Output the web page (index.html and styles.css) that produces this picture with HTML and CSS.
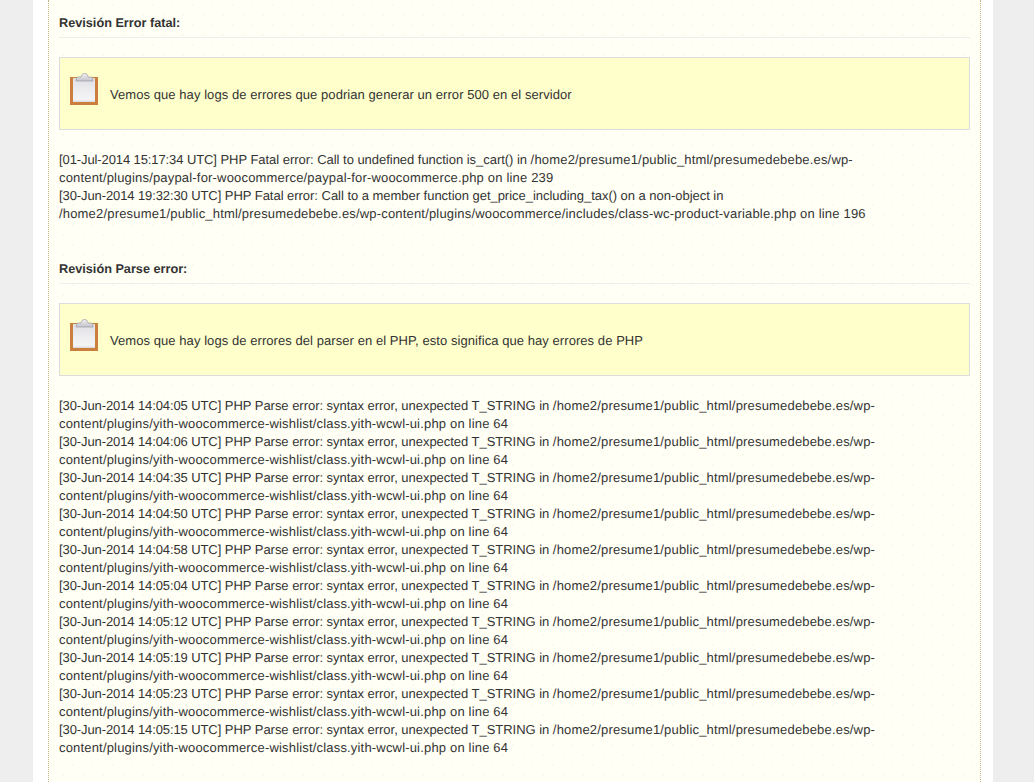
FILE: index.html
```html
<!DOCTYPE html>
<html lang="es">
<head>
<meta charset="utf-8">
<title>Revisión de errores</title>
<link rel="stylesheet" href="styles.css">
</head>
<body>
<div class="page">
  <div class="panel">
    <h3 class="heading">Revisión Error fatal:</h3>
    <div class="notice">
      <svg class="clip" width="28" height="32" viewBox="0 0 28 32"><defs><linearGradient id="sheet" x1="0" y1="0" x2="0" y2="1"><stop offset="0" stop-color="#dfdfe4"/><stop offset="0.55" stop-color="#eeeef1"/><stop offset="0.9" stop-color="#f4f4f6"/><stop offset="1" stop-color="#d9d8dc"/></linearGradient><linearGradient id="clasp" x1="0" y1="0" x2="0" y2="1"><stop offset="0" stop-color="#eeeef2"/><stop offset="1" stop-color="#c4c4cc"/></linearGradient></defs><rect x="0" y="4" width="28" height="28" fill="#cb7f3d"/><rect x="3" y="5" width="22" height="24" fill="url(#sheet)"/><path d="M6 8 L6.500 5 Q7 4 8 4 H11 C11.500 1.500 12.500 0.500 14.500 0.500 C16.500 0.500 17.500 1.500 18 4 H21 Q22 4 22.500 5 L23 8 Z" fill="url(#clasp)" stroke="#9a9aa5" stroke-width="0.7"/></svg>
      <span class="msg">Vemos que hay logs de errores que podrian generar un error 500 en el servidor</span>
    </div>
    <p class="log"><span class="ts">[01-Jul-2014 15:17:34 UTC]</span> PHP Fatal error: Call to undefined function is_cart() in <span class="path">/home2/presume1/public_html/presumedebebe.es/wp-</span><span class="path">content/plugins/paypal-for-woocommerce/paypal-for-woocommerce.php on line 239</span><br>
<span class="ts">[30-Jun-2014 19:32:30 UTC]</span> PHP Fatal error: Call to a member function get_price_including_tax() on a non-object in <span class="path">/home2/presume1/public_html/presumedebebe.es/wp-content/plugins/woocommerce/includes/class-wc-product-variable.php on line 196</span></p>
    <h3 class="heading second">Revisión Parse error:</h3>
    <div class="notice">
      <svg class="clip" width="28" height="32" viewBox="0 0 28 32"><rect x="0" y="4" width="28" height="28" fill="#cb7f3d"/><rect x="3" y="5" width="22" height="24" fill="url(#sheet)"/><path d="M6 8 L6.500 5 Q7 4 8 4 H11 C11.500 1.500 12.500 0.500 14.500 0.500 C16.500 0.500 17.500 1.500 18 4 H21 Q22 4 22.500 5 L23 8 Z" fill="url(#clasp)" stroke="#9a9aa5" stroke-width="0.7"/></svg>
      <span class="msg">Vemos que hay logs de errores del parser en el PHP, esto significa que hay errores de PHP</span>
    </div>
    <p class="log"><span class="ts">[30-Jun-2014 14:04:05 UTC]</span> PHP Parse error: syntax error, unexpected T_STRING in <span class="path">/home2/presume1/public_html/presumedebebe.es/wp-</span><span class="path">content/plugins/yith-woocommerce-wishlist/class.yith-wcwl-ui.php on line 64</span><br>
<span class="ts">[30-Jun-2014 14:04:06 UTC]</span> PHP Parse error: syntax error, unexpected T_STRING in <span class="path">/home2/presume1/public_html/presumedebebe.es/wp-</span><span class="path">content/plugins/yith-woocommerce-wishlist/class.yith-wcwl-ui.php on line 64</span><br>
<span class="ts">[30-Jun-2014 14:04:35 UTC]</span> PHP Parse error: syntax error, unexpected T_STRING in <span class="path">/home2/presume1/public_html/presumedebebe.es/wp-</span><span class="path">content/plugins/yith-woocommerce-wishlist/class.yith-wcwl-ui.php on line 64</span><br>
<span class="ts">[30-Jun-2014 14:04:50 UTC]</span> PHP Parse error: syntax error, unexpected T_STRING in <span class="path">/home2/presume1/public_html/presumedebebe.es/wp-</span><span class="path">content/plugins/yith-woocommerce-wishlist/class.yith-wcwl-ui.php on line 64</span><br>
<span class="ts">[30-Jun-2014 14:04:58 UTC]</span> PHP Parse error: syntax error, unexpected T_STRING in <span class="path">/home2/presume1/public_html/presumedebebe.es/wp-</span><span class="path">content/plugins/yith-woocommerce-wishlist/class.yith-wcwl-ui.php on line 64</span><br>
<span class="ts">[30-Jun-2014 14:05:04 UTC]</span> PHP Parse error: syntax error, unexpected T_STRING in <span class="path">/home2/presume1/public_html/presumedebebe.es/wp-</span><span class="path">content/plugins/yith-woocommerce-wishlist/class.yith-wcwl-ui.php on line 64</span><br>
<span class="ts">[30-Jun-2014 14:05:12 UTC]</span> PHP Parse error: syntax error, unexpected T_STRING in <span class="path">/home2/presume1/public_html/presumedebebe.es/wp-</span><span class="path">content/plugins/yith-woocommerce-wishlist/class.yith-wcwl-ui.php on line 64</span><br>
<span class="ts">[30-Jun-2014 14:05:19 UTC]</span> PHP Parse error: syntax error, unexpected T_STRING in <span class="path">/home2/presume1/public_html/presumedebebe.es/wp-</span><span class="path">content/plugins/yith-woocommerce-wishlist/class.yith-wcwl-ui.php on line 64</span><br>
<span class="ts">[30-Jun-2014 14:05:23 UTC]</span> PHP Parse error: syntax error, unexpected T_STRING in <span class="path">/home2/presume1/public_html/presumedebebe.es/wp-</span><span class="path">content/plugins/yith-woocommerce-wishlist/class.yith-wcwl-ui.php on line 64</span><br>
<span class="ts">[30-Jun-2014 14:05:15 UTC]</span> PHP Parse error: syntax error, unexpected T_STRING in <span class="path">/home2/presume1/public_html/presumedebebe.es/wp-</span><span class="path">content/plugins/yith-woocommerce-wishlist/class.yith-wcwl-ui.php on line 64</span></p>
  </div>
</div>
</body>
</html>
```

FILE: styles.css
```css
html, body { margin: 0; padding: 0; height: 782px; overflow: hidden; }
body {
  background: #eeeeee;
  font-family: "Liberation Sans", Arial, sans-serif;
  font-size: 13px;
  line-height: 18px;
  color: #333333;
  text-rendering: geometricPrecision;
}
.page {
  box-sizing: border-box;
  width: 960px;
  height: 782px;
  margin-left: 33px;
  padding: 0 12px 0 15px;
  background: #ffffff;
}
.panel {
  box-sizing: border-box;
  height: 782px;
  padding: 14px 10px 0;
  border-left: 1px dotted #c4b585;
  border-right: 1px dotted #c4b585;
  background-color: #fffff5;
  background-image:
    radial-gradient(circle at 1px 1px, #fbfbe9 1px, transparent 1px),
    radial-gradient(circle at 1px 1px, #fbfbe9 1px, transparent 1px);
  background-size: 20px 20px, 20px 20px;
  background-position: 3px 4px, 13px 14px;
}
.heading {
  margin: 0;
  padding-bottom: 5px;
  font-size: 12.7px;
  line-height: 18px;
  font-weight: bold;
  color: #333333;
  border-bottom: 1px solid #eeeeee;
}
.second { margin-top: 37px; }
.notice {
  display: flex;
  align-items: center;
  gap: 12px;
  box-sizing: border-box;
  height: 73px;
  margin-top: 19px;
  padding: 0 10px;
  background: #ffffcc;
  border: 1px solid #dddddd;
  color: #333333;
}
.msg { position: relative; top: 1px; letter-spacing: 0.065px; }
.clip { flex: none; margin-bottom: 9px; }
.log { margin: 21px 0 0; color: #333333; letter-spacing: -0.03px; }
.ts { letter-spacing: -0.1px; }
.path { letter-spacing: 0.18px; }
```
